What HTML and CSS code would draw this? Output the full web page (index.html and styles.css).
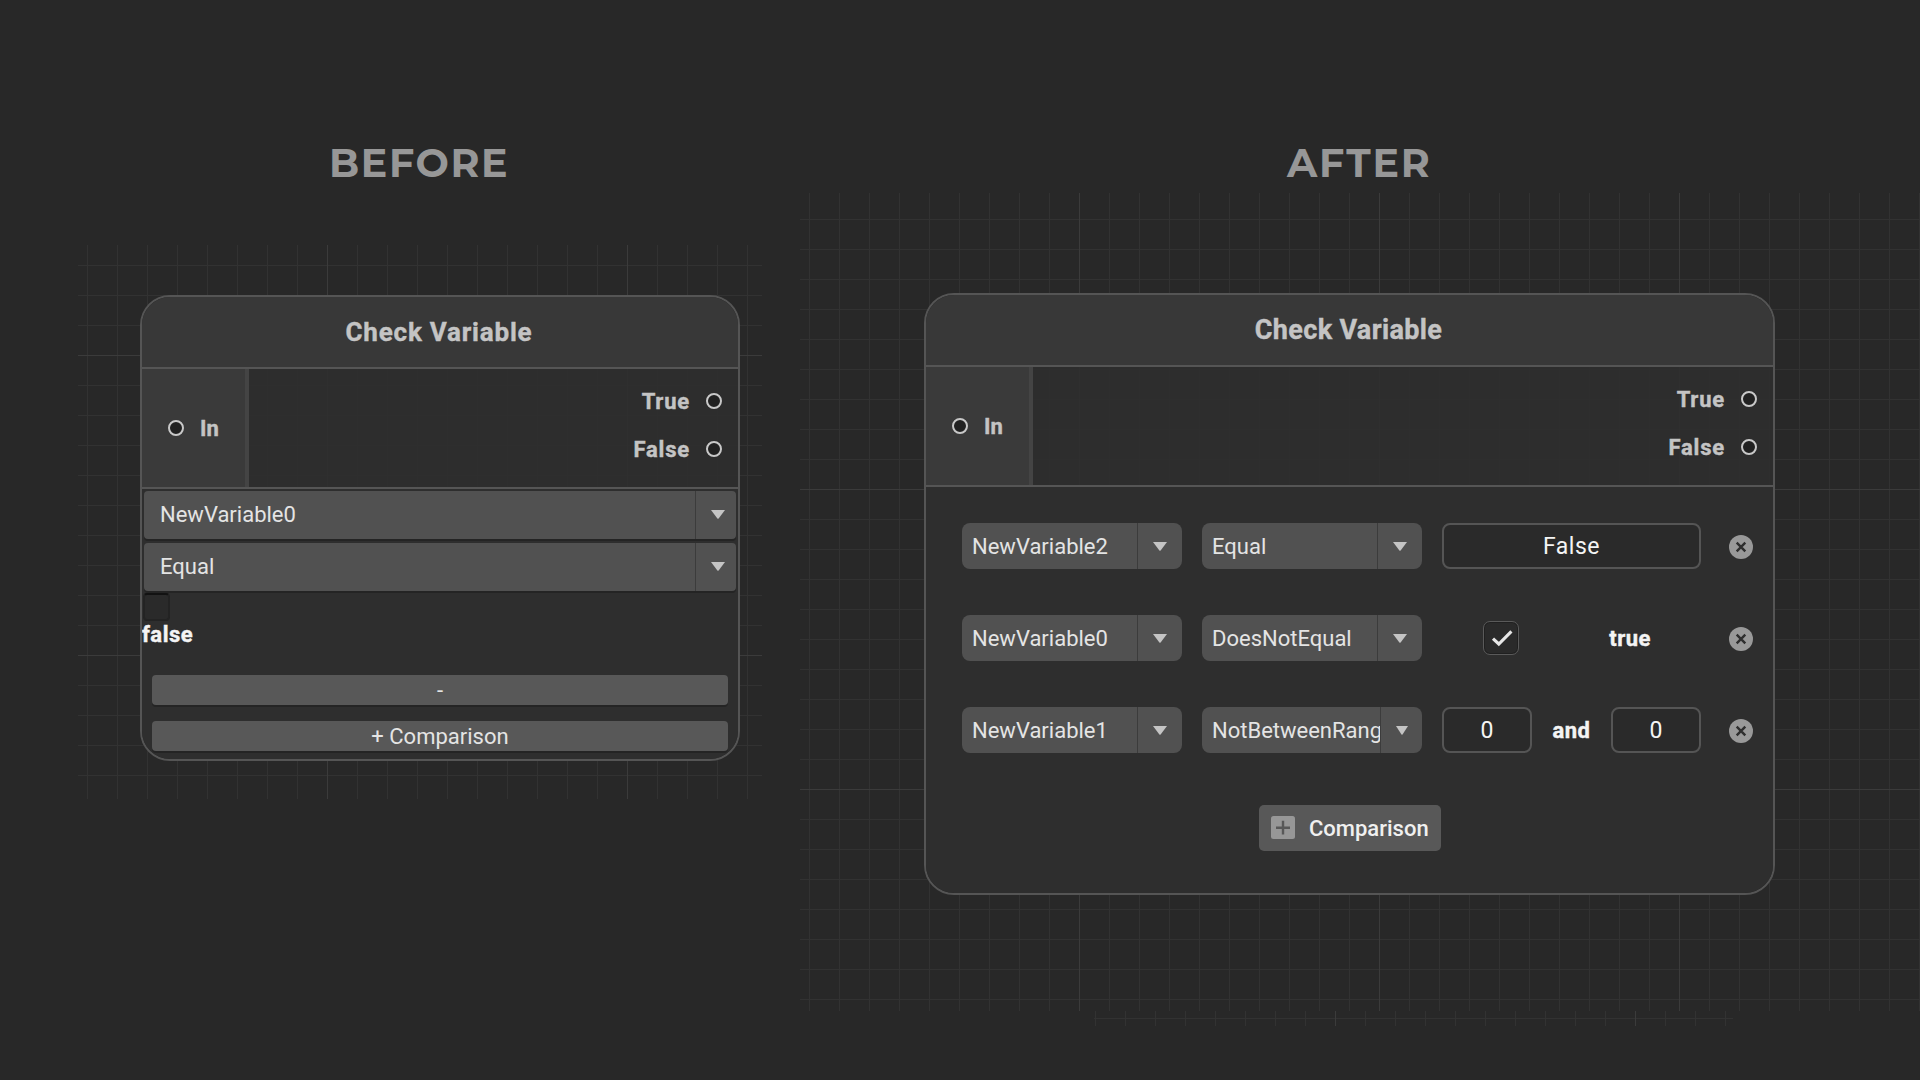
FILE: index.html
```html
<!DOCTYPE html>
<html lang="en">
<head>
<meta charset="utf-8">
<title>Check Variable: before and after</title>
<link rel="stylesheet" href="styles.css">
</head>
<body>
<svg class="defs" width="0" height="0" aria-hidden="true">
  <symbol id="arrow" viewBox="0 0 14 9"><path d="M0 0H14L7.6 8.4Q7 9 6.4 8.4Z" fill="#c4c4c4"/></symbol>
  <symbol id="remove" viewBox="0 0 24 24"><circle cx="12" cy="12" r="12" fill="#999"/><path d="M7.7 7.7L16.3 16.3M16.3 7.7L7.7 16.3" stroke="#2e2e2e" stroke-width="2.4"/></symbol>
</svg>
<main class="board">
  <h1 class="caption caption-before">BEFORE</h1>
  <h1 class="caption caption-after">AFTER</h1>

  <div class="grid grid-before"></div>
  <div class="grid grid-after"></div>
  <div class="grid grid-strip"></div>

  <section class="node node-before">
    <header class="title">Check Variable</header>
    <div class="ports">
      <div class="port-in"><i class="ring"></i><span>In</span></div>
      <div class="port-out">
        <div class="port"><span>True</span><i class="ring"></i></div>
        <div class="port"><span>False</span><i class="ring"></i></div>
      </div>
    </div>
    <div class="body">
      <div class="drop"><span class="drop-text">NewVariable0</span><span class="drop-arrow"><svg width="14" height="9"><use href="#arrow"/></svg></span></div>
      <div class="drop"><span class="drop-text">Equal</span><span class="drop-arrow"><svg width="14" height="9"><use href="#arrow"/></svg></span></div>
      <div class="tick-empty"></div>
      <div class="value">false</div>
      <div class="bar">-</div>
      <div class="bar">+ Comparison</div>
    </div>
  </section>

  <section class="node node-after">
    <header class="title">Check Variable</header>
    <div class="ports">
      <div class="port-in"><i class="ring"></i><span>In</span></div>
      <div class="port-out">
        <div class="port"><span>True</span><i class="ring"></i></div>
        <div class="port"><span>False</span><i class="ring"></i></div>
      </div>
    </div>
    <div class="body">
      <div class="row">
        <div class="drop"><span class="drop-text">NewVariable2</span><span class="drop-arrow"><svg width="14" height="9"><use href="#arrow"/></svg></span></div>
        <div class="drop"><span class="drop-text">Equal</span><span class="drop-arrow"><svg width="14" height="9"><use href="#arrow"/></svg></span></div>
        <div class="operand"><div class="field">False</div></div>
        <svg class="remove" width="24" height="24"><use href="#remove"/></svg>
      </div>
      <div class="row">
        <div class="drop"><span class="drop-text">NewVariable0</span><span class="drop-arrow"><svg width="14" height="9"><use href="#arrow"/></svg></span></div>
        <div class="drop"><span class="drop-text">DoesNotEqual</span><span class="drop-arrow"><svg width="14" height="9"><use href="#arrow"/></svg></span></div>
        <div class="operand operand-bool">
          <div class="tick"><svg width="22" height="18" viewBox="0 0 22 18"><path d="M2 9.6L7.8 15L20.4 2.4" fill="none" stroke="#e6e6e6" stroke-width="3.1"/></svg></div>
          <span class="word">true</span>
        </div>
        <svg class="remove" width="24" height="24"><use href="#remove"/></svg>
      </div>
      <div class="row">
        <div class="drop"><span class="drop-text">NewVariable1</span><span class="drop-arrow"><svg width="14" height="9"><use href="#arrow"/></svg></span></div>
        <div class="drop drop-tight"><span class="drop-text">NotBetweenRang</span><span class="drop-arrow"><svg width="12" height="9" viewBox="0 0 14 9" preserveAspectRatio="none"><path d="M0 0H14L7.6 8.4Q7 9 6.4 8.4Z" fill="#c4c4c4"/></svg></span></div>
        <div class="operand"><div class="field field-number">0</div><span class="word">and</span><div class="field field-number">0</div></div>
        <svg class="remove" width="24" height="24"><use href="#remove"/></svg>
      </div>
      <div class="add">
        <svg width="24" height="24" viewBox="0 0 24 24"><rect width="24" height="23" rx="2.5" fill="#979797"/><path d="M12 4.8V18.6M5 11.7H19" stroke="#585858" stroke-width="2.4"/></svg>
        <span>Comparison</span>
      </div>
    </div>
  </section>
</main>
</body>
</html>
```
FILE: styles.css
```css
* { box-sizing: border-box; }

body {
  margin: 0;
  background: #282828;
  font-family: Roboto, "Liberation Sans", sans-serif;
}

.defs { position: absolute; }

.board {
  position: relative;
  width: 1920px;
  height: 1080px;
  overflow: hidden;
}

/* captions */
.caption {
  position: absolute;
  margin: 0;
  top: 138px;
  font-family: Montserrat, Inter, sans-serif;
  font-size: 39.5px;
  line-height: 50px;
  font-weight: 700;
  color: #979797;
  white-space: nowrap;
}
.caption-before { left: 329px; letter-spacing: 1.6px; }
.caption-after { left: 1287px; letter-spacing: 1.8px; }

/* canvas grid: 30px cells, a brighter line every 300px */
.grid {
  --x: 0px;
  --y: 0px;
  --mx: 0px;
  --my: 0px;
  position: absolute;
  background-image:
    linear-gradient(90deg, #3b3b3b 1px, transparent 1px),
    linear-gradient(#3b3b3b 1px, transparent 1px),
    linear-gradient(90deg, #323232 1px, transparent 1px),
    linear-gradient(#323232 1px, transparent 1px);
  background-size: 300px 300px, 300px 300px, 30px 30px, 30px 30px;
  background-position: var(--mx) 0, 0 var(--my), var(--x) 0, 0 var(--y);
}
.grid-before { left: 78px; top: 245px; width: 684px; height: 554px; --x: 9px; --y: 20px; --mx: 249px; --my: 110px; }
.grid-after { left: 800px; top: 193px; width: 1120px; height: 818px; --x: 9px; --y: 26px; --mx: 279px; --my: 296px; }
.grid-strip { left: 1094px; top: 1011px; width: 639px; height: 15px; --x: 1px; --y: 7px; --mx: 241px; --my: 100px; }

/* nodes */
.node {
  position: absolute;
  display: flex;
  flex-direction: column;
  border: 2px solid #555;
  border-radius: 30px;
  overflow: hidden;
}
.node-before { left: 140px; top: 295px; width: 600px; height: 466px; }
.node-after { left: 924px; top: 293px; width: 851px; height: 602px; }

.title {
  flex: none;
  height: 72px;
  padding-right: 2px;
  border-bottom: 2px solid #555;
  background: #383838;
  color: #c4c4c4;
  font-size: 26px;
  font-weight: 700;
  line-height: 70px;
  text-align: center;
  letter-spacing: 0.8px;
  -webkit-text-stroke: 0.4px #c4c4c4;
}
.node-after .title { font-size: 27px; line-height: 71px; letter-spacing: 0.35px; }

.ports {
  flex: none;
  display: flex;
  justify-content: space-between;
  height: 120px;
  border-bottom: 2px solid #555;
  background: rgba(46, 46, 46, 0.88);
  color: #c4c4c4;
  font-size: 22px;
  font-weight: 700;
  -webkit-text-stroke: 0.4px #c4c4c4;
}
.port-in {
  display: flex;
  align-items: center;
  gap: 16px;
  width: 107px;
  padding-left: 26px;
  border-right: 4px solid #444;
  background: #3a3a3a;
}
.port-out {
  display: flex;
  flex-direction: column;
  gap: 22px;
  padding: 19px 16px 0 0;
  letter-spacing: 0.8px;
}
.port {
  display: flex;
  justify-content: flex-end;
  align-items: center;
  gap: 16px;
  height: 26px;
}
.ring {
  width: 16px;
  height: 16px;
  border: 2px solid #c8c8c8;
  border-radius: 50%;
  background: #212121;
}

.body {
  flex: 1;
  display: flex;
  flex-direction: column;
  background: #2e2e2e;
  color: #e4e4e4;
  font-size: 22px;
}
.body > * { flex: none; }

.drop {
  display: flex;
  background: #515151;
  overflow: hidden;
}
.drop-text {
  flex: 1;
  min-width: 0;
  overflow: hidden;
  white-space: nowrap;
}
.drop-arrow {
  display: flex;
  flex: none;
  align-items: center;
  justify-content: center;
  border-left: 1px solid #3c3c3c;
}

/* before */
.node-before .body { padding-top: 2px; }
.node-before .drop {
  height: 48px;
  margin: 0 2px 4px;
  border-radius: 4px;
  box-shadow: 0 2px #242424;
  line-height: 47px;
}
.node-before .drop-text { padding-left: 16px; }
.node-before .drop-arrow { width: 41px; padding: 0 0 2px 4px; }
.tick-empty {
  width: 27px;
  height: 28px;
  margin: -2px 0 0 1px;
  border: 2px solid #232323;
  border-top-color: #121212;
  border-radius: 4px;
  background: #2a2a2a;
}
.value {
  height: 54px;
  color: #f4f4f4;
  font-weight: 700;
  line-height: 27px;
  letter-spacing: 0.5px;
  -webkit-text-stroke: 0.4px #f4f4f4;
}
.bar {
  height: 30px;
  margin: 0 10px 16px;
  border-radius: 4px;
  background: #585858;
  box-shadow: 0 2px #242424;
  line-height: 31px;
  text-align: center;
}
.bar:last-child { margin-bottom: 0; }

/* after */
.node-after .body { padding: 36px 20px 0 36px; gap: 46px; }
.row { display: flex; height: 46px; }
.row .drop {
  width: 220px;
  margin-right: 20px;
  border-radius: 8px;
  line-height: 47px;
}
.row .drop-text { padding-left: 10px; }
.row .drop-arrow { width: 45px; }
.row .drop-tight .drop-arrow { width: 42px; }
.operand {
  display: flex;
  align-items: center;
  justify-content: space-between;
  width: 259px;
  color: #f4f4f4;
}
.field {
  flex: 1;
  height: 46px;
  border: 2px solid #555;
  border-radius: 8px;
  background: #2a2a2a;
  line-height: 43px;
  text-align: center;
  font-size: 23px;
  letter-spacing: 0.5px;
}
.field-number { flex: 0 0 90px; letter-spacing: 0; }
.word {
  font-weight: 700;
  letter-spacing: 0.5px;
  -webkit-text-stroke: 0.4px #f4f4f4;
}
.operand-bool { padding: 0 50px 0 41px; }
.tick {
  display: flex;
  flex: none;
  align-items: center;
  justify-content: center;
  width: 36px;
  height: 34px;
  padding-left: 1px;
  border: 1px solid #5a5a5a;
  border-radius: 7px;
  background: #2a2a2a;
  box-shadow: inset 0 0 0 1px #202020;
}
.remove { margin: 12px 0 0 28px; }
.add {
  display: flex;
  align-items: center;
  gap: 14px;
  width: 182px;
  height: 46px;
  margin: 6px 0 0 297px;
  padding-left: 12px;
  border-radius: 5px;
  background: #585858;
  color: #f0f0f0;
  font-weight: 500;
}
```
